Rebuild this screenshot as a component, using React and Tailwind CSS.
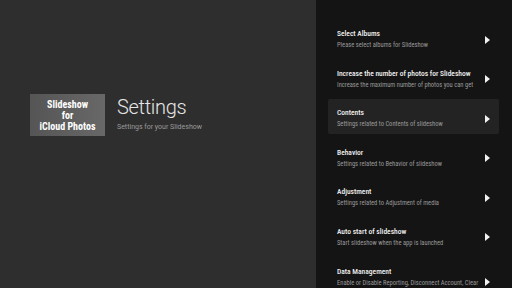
import React from "react";

const items = [
  { t: "Select Albums", s: "Please select albums for Slideshow" },
  { t: "Increase the number of photos for Slideshow", s: "Increase the maximum number of photos you can get" },
  { t: "Contents", s: "Settings related to Contents of slideshow", active: true },
  { t: "Behavior", s: "Settings related to Behavior of slideshow" },
  { t: "Adjustment", s: "Settings related to Adjustment of media" },
  { t: "Auto start of slideshow", s: "Start slideshow when the app is launched" },
  { t: "Data Management", s: "Enable or Disable Reporting, Disconnect Account, Clear data" },
];

function Arrow() {
  return (
    <svg width="5" height="8" viewBox="0 0 5 8" className="shrink-0">
      <polygon points="0,0 5,4 0,8" fill="#f2f2f2" />
    </svg>
  );
}

export default function App() {
  return (
    <div
      className="w-[512px] h-[288px] flex overflow-hidden"
      style={{ fontFamily: "Roboto, 'Noto Sans', sans-serif" }}
    >
      <div className="w-[316px] h-full bg-[#2e2e2e] flex items-center pl-[30px] pb-[58px] pt-[0px]">
        <div className="flex items-center">
          <div className="w-[75px] h-[42px] bg-gradient-to-r from-[#555555] to-[#686868] flex flex-col items-center justify-center text-white font-bold text-[10px] leading-[11px] [font-stretch:condensed] [font-family:'Roboto_Condensed','DejaVu_Sans_Condensed',Roboto,sans-serif]">
            <span>Slideshow</span>
            <span>for</span>
            <span>iCloud Photos</span>
          </div>
          <div className="ml-[12px] flex flex-col">
            <span className="text-[20px] leading-[24px] font-light text-[#e6e6e6] mt-[-4px] tracking-[-0.3px]">Settings</span>
            <span className="text-[7px] leading-[10px] text-[#9a9a9a] mt-[3px]">Settings for your Slideshow</span>
          </div>
        </div>
      </div>
      <div className="flex-1 h-full bg-[#141414] pt-[20px] pr-[13px] pl-[12px] flex flex-col gap-[4.6px] [font-stretch:condensed] [font-family:'Roboto_Condensed','DejaVu_Sans_Condensed',Roboto,sans-serif]">
        {items.map((it) => (
          <div
            key={it.t}
            className={
              "flex items-center rounded-[2px] pl-[9px] pr-[9px] pt-[9px] pb-[5px] " +
              (it.active ? "bg-[#232323]" : "")
            }
          >
            <div className="flex-1 flex flex-col min-w-0 pr-[6px]">
              <span className="text-[7.5px] leading-[10px] font-medium text-[#f0f0f0] whitespace-nowrap">{it.t}</span>
              <span className="text-[6.5px] leading-[10px] text-[#9a9a9a] mt-[1px]">{it.s}</span>
            </div>
            <Arrow />
          </div>
        ))}
      </div>
    </div>
  );
}
